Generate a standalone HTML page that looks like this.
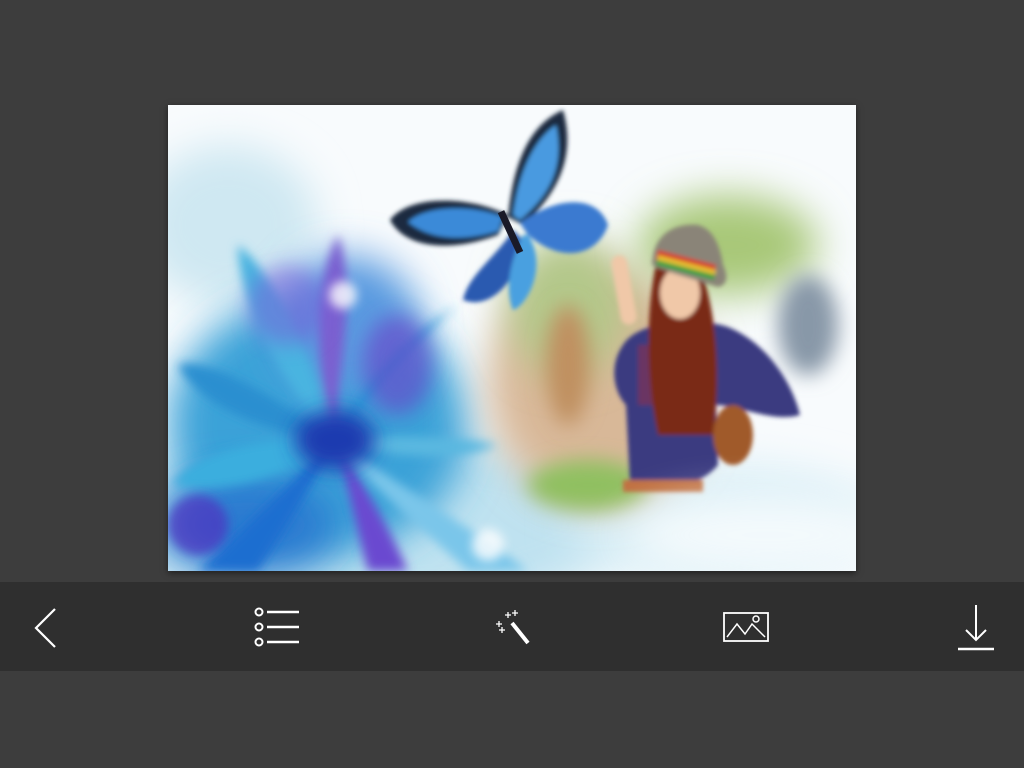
<!DOCTYPE html>
<html><head><meta charset="utf-8"><style>
html,body{margin:0;padding:0;width:1024px;height:768px;background:#3d3d3d;overflow:hidden;font-family:"Liberation Sans",sans-serif}
#photo{position:absolute;left:168px;top:105px;width:688px;height:466px;background:#fff;box-shadow:0 2px 6px rgba(0,0,0,.5);overflow:hidden}
#bar{position:absolute;left:0;top:582px;width:1024px;height:89px;background:#2f2f2f}
</style></head><body>
<div id="photo">
<svg width="688" height="466" viewBox="0 0 688 466">
<defs>
<filter id="b20" x="-50%" y="-50%" width="200%" height="200%"><feGaussianBlur stdDeviation="20"/></filter>
<filter id="b10" x="-50%" y="-50%" width="200%" height="200%"><feGaussianBlur stdDeviation="10"/></filter>
<filter id="b5" x="-50%" y="-50%" width="200%" height="200%"><feGaussianBlur stdDeviation="5"/></filter>
<filter id="b2" x="-50%" y="-50%" width="200%" height="200%"><feGaussianBlur stdDeviation="2"/></filter>
</defs>
<rect width="688" height="466" fill="#f8fbfd"/>
<ellipse cx="60" cy="120" rx="90" ry="80" fill="#cfe8f2" filter="url(#b20)"/>
<ellipse cx="200" cy="420" rx="260" ry="90" fill="#bfe2f0" filter="url(#b20)"/>
<ellipse cx="560" cy="420" rx="160" ry="60" fill="#d8eef6" filter="url(#b20)"/>
<!-- flower mass -->
<ellipse cx="150" cy="320" rx="150" ry="130" fill="#3aa2d8" filter="url(#b20)"/>
<ellipse cx="180" cy="220" rx="70" ry="70" fill="#5a9ae0" filter="url(#b20)"/>
<ellipse cx="80" cy="420" rx="90" ry="50" fill="#2a7ad0" filter="url(#b20)"/>
<!-- background scene -->
<ellipse cx="430" cy="280" rx="110" ry="120" fill="#d8b898" filter="url(#b20)"/>
<ellipse cx="400" cy="200" rx="60" ry="70" fill="#b3c88a" filter="url(#b20)"/>
<ellipse cx="560" cy="140" rx="90" ry="50" fill="#a8c878" filter="url(#b20)"/>
<ellipse cx="400" cy="260" rx="22" ry="60" fill="#c09060" filter="url(#b10)"/>
<ellipse cx="420" cy="380" rx="60" ry="25" fill="#90c060" filter="url(#b10)"/>
<ellipse cx="640" cy="220" rx="30" ry="50" fill="#8898a8" filter="url(#b10)"/>
<g filter="url(#b5)">
<path d="M167 335 C120 300 40 250 10 260 C30 300 100 330 167 335Z" fill="#2a8fd0"/>
<path d="M167 335 C90 330 20 350 5 380 C60 390 130 370 167 335Z" fill="#3aaede"/>
<path d="M167 335 C150 270 110 170 70 140 C70 200 120 290 167 335Z" fill="#4ab4e0"/>
<path d="M167 335 C170 260 190 190 170 130 C140 190 150 270 167 335Z" fill="#7a60d0"/>
<path d="M167 335 C210 290 250 230 290 200 C240 230 190 280 167 335Z" fill="#2a9ad8"/>
<path d="M167 335 C220 330 280 330 330 340 C280 360 210 350 167 335Z" fill="#5ab8e0"/>
<path d="M167 335 C180 380 190 430 200 466 L240 466 C220 420 190 370 167 335Z" fill="#6a4ad0"/>
<path d="M167 335 C130 370 80 420 30 466 L90 466 C120 420 150 370 167 335Z" fill="#1f6ed0"/>
<path d="M167 335 C230 380 300 420 360 466 L300 466 C250 420 200 380 167 335Z" fill="#7ac6ea"/>
</g>
<ellipse cx="167" cy="335" rx="40" ry="30" fill="#1a3ab0" filter="url(#b10)"/>
<ellipse cx="230" cy="260" rx="35" ry="50" fill="#6a40c8" opacity=".6" filter="url(#b10)"/>
<ellipse cx="120" cy="200" rx="40" ry="40" fill="#7a5ad8" opacity=".5" filter="url(#b10)"/>
<ellipse cx="30" cy="420" rx="30" ry="30" fill="#5030c0" opacity=".7" filter="url(#b5)"/>
<circle cx="175" cy="190" r="14" fill="#fff" opacity=".8" filter="url(#b5)"/>
<circle cx="320" cy="440" r="16" fill="#fff" opacity=".8" filter="url(#b5)"/>
<!-- butterfly -->
<g filter="url(#b2)">
<path d="M340 110 C300 90 240 90 222 115 C235 140 275 150 330 130Z" fill="#1e2a40"/>
<path d="M335 112 C300 98 255 102 240 117 C260 133 290 138 330 126Z" fill="#3a8ad8"/>
<path d="M340 112 C345 60 360 20 395 5 C405 40 400 80 355 120Z" fill="#1e2a40"/>
<path d="M345 110 C350 70 365 35 388 20 C395 55 388 85 352 115Z" fill="#4a9ae0"/>
<path d="M352 118 C390 90 430 90 440 120 C430 150 395 160 360 130Z" fill="#3a7ad0"/>
<path d="M345 125 C330 150 300 170 295 195 C320 205 350 180 355 135Z" fill="#2a5ab0"/>
<path d="M360 130 C380 160 360 200 345 205 C335 180 345 150 355 130Z" fill="#4aa0e0"/>
</g>
<rect x="338" y="105" width="7" height="45" transform="rotate(-25 341 125)" fill="#1a1a28"/>
<!-- woman -->
<g filter="url(#b2)">
<path d="M455 240 C470 215 530 212 560 222 C600 238 625 280 632 310 C605 318 570 300 548 300 L550 360 C530 385 480 390 462 378 L458 300 C444 285 442 258 455 240Z" fill="#3a3a80"/>
<path d="M470 240 L540 240 L545 300 L470 300Z" fill="#8a3050" opacity=".6"/>
<path d="M490 150 C480 190 475 260 490 330 L545 330 C555 260 545 190 530 160Z" fill="#7a2a18"/>
<ellipse cx="512" cy="188" rx="20" ry="26" fill="#f0c8a8"/>
<rect x="448" y="150" width="16" height="70" rx="8" fill="#f0c8a8" transform="rotate(-10 456 185)"/>
<path d="M484 160 C485 130 505 118 530 120 C545 124 552 140 555 160 C560 170 560 180 550 182 C520 172 500 168 484 160Z" fill="#8a8478"/>
<path d="M490 145 L548 160 L546 170 L488 155Z" fill="#d83a2a"/>
<path d="M490 150 L548 165 L547 170 L489 156Z" fill="#e8c030"/>
<path d="M489 155 L547 170 L546 175 L488 160Z" fill="#30a040"/>
<ellipse cx="565" cy="330" rx="20" ry="30" fill="#a05a2a"/>
<rect x="455" y="375" width="80" height="12" fill="#c07040"/>
</g>
<ellipse cx="600" cy="430" rx="140" ry="40" fill="#fff" opacity=".7" filter="url(#b20)"/>
</svg>
</div>
<div id="bar">
<svg width="1024" height="89" viewBox="0 582 1024 89" fill="none" stroke="#fff" stroke-width="2">
<polyline points="55,609 36,628 55,647" stroke-width="2.2"/>
<circle cx="259" cy="612" r="3.5"/><circle cx="259" cy="627" r="3.5"/><circle cx="259" cy="642" r="3.5"/>
<line x1="267" y1="612" x2="299" y2="612" stroke-width="2.5"/><line x1="267" y1="627" x2="299" y2="627" stroke-width="2.5"/><line x1="267" y1="642" x2="299" y2="642" stroke-width="2.5"/>
<line x1="512" y1="623" x2="528" y2="643" stroke-width="4"/>
<g stroke-width="1.3"><path d="M508 612v6M505 615h6M515 610v6M512 613h6M499 621v6M496 624h6M502 627v6M499 630h6"/></g>
<rect x="724" y="613" width="44" height="28" stroke-width="1.8"/>
<polyline points="727,637 737,624 745,634 752,624 765,637" stroke-width="1.5"/>
<circle cx="756" cy="619" r="3" stroke-width="1.5"/>
<line x1="976" y1="605" x2="976" y2="640"/>
<polyline points="966,630 976,640 986,630"/>
<line x1="958" y1="649" x2="994" y2="649" stroke-width="2.5"/>
</svg>
</div>
</body></html>
